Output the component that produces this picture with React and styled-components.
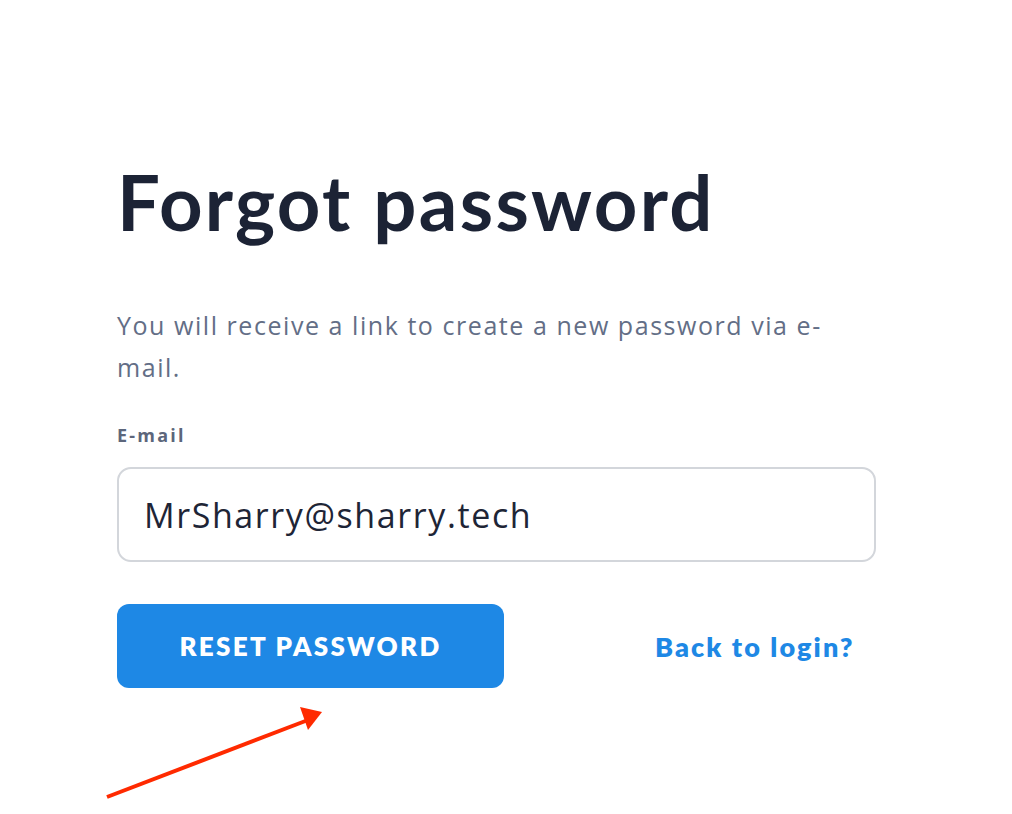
import React, { useState } from 'react';
import styled, { createGlobalStyle } from 'styled-components';

const GlobalStyle = createGlobalStyle`
  html, body {
    margin: 0;
    padding: 0;
    background: #ffffff;
  }
  body {
    font-family: 'Open Sans', 'Lato', sans-serif;
  }
`;

const Page = styled.div`
  position: relative;
  width: 1012px;
  height: 814px;
  overflow: hidden;
  background: #fff;
`;

const Form = styled.div`
  display: flex;
  flex-direction: column;
  width: 759px;
  padding: 160px 0 0 117px;
`;

const Title = styled.h1`
  margin: 0;
  font-family: 'Lato', sans-serif;
  font-weight: 700;
  font-size: 76px;
  line-height: 84px;
  color: #1c2335;
  letter-spacing: 2.3px;
`;

const Intro = styled.p`
  margin: 60px 0 0;
  font-size: 25px;
  line-height: 42px;
  color: #636e86;
  letter-spacing: 1.55px;
  width: 730px;
`;

const Label = styled.label`
  margin-top: 35px;
  font-size: 18px;
  font-weight: 700;
  color: #5c667b;
  letter-spacing: 2.2px;
`;

const Input = styled.input`
  margin-top: 20px;
  box-sizing: border-box;
  width: 759px;
  height: 95px;
  padding: 0 25px;
  border: 2px solid #d3d6db;
  border-radius: 14px;
  font-family: 'Open Sans', sans-serif;
  font-size: 34px;
  letter-spacing: 1.6px;
  color: #1e2536;
  outline: none;
`;

const Actions = styled.div`
  display: flex;
  align-items: center;
  margin-top: 42px;
`;

const ResetButton = styled.button`
  width: 387px;
  height: 84px;
  border: none;
  border-radius: 12px;
  background: #1e88e5;
  color: #fff;
  font-family: 'Lato', sans-serif;
  font-weight: 800;
  font-size: 26px;
  letter-spacing: 2.3px;
  cursor: pointer;
`;

const BackLink = styled.a`
  margin-left: 151px;
  font-family: 'Lato', sans-serif;
  color: #1e88e5;
  font-weight: 800;
  font-size: 27px;
  letter-spacing: 2.1px;
  text-decoration: none;
  cursor: pointer;
`;

const Arrow = styled.svg`
  position: absolute;
  left: 100px;
  top: 700px;
`;

export default function App() {
  const [email, setEmail] = useState('MrSharry@sharry.tech');

  return (
    <Page>
      <GlobalStyle />
      <Form>
        <Title>Forgot password</Title>
        <Intro>You will receive a link to create a new password via e-mail.</Intro>
        <Label htmlFor="email">E-mail</Label>
        <Input id="email" type="text" value={email} onChange={e => setEmail(e.target.value)} />
        <Actions>
          <ResetButton type="button">RESET PASSWORD</ResetButton>
          <BackLink>Back to login?</BackLink>
        </Actions>
      </Form>
      <Arrow width="240" height="110" viewBox="0 0 240 110">
        <line x1="7" y1="97" x2="208" y2="20" stroke="#ff2a00" strokeWidth="4" />
        <polygon points="222,12 200,7 208,30" fill="#ff2a00" />
      </Arrow>
    </Page>
  );
}
